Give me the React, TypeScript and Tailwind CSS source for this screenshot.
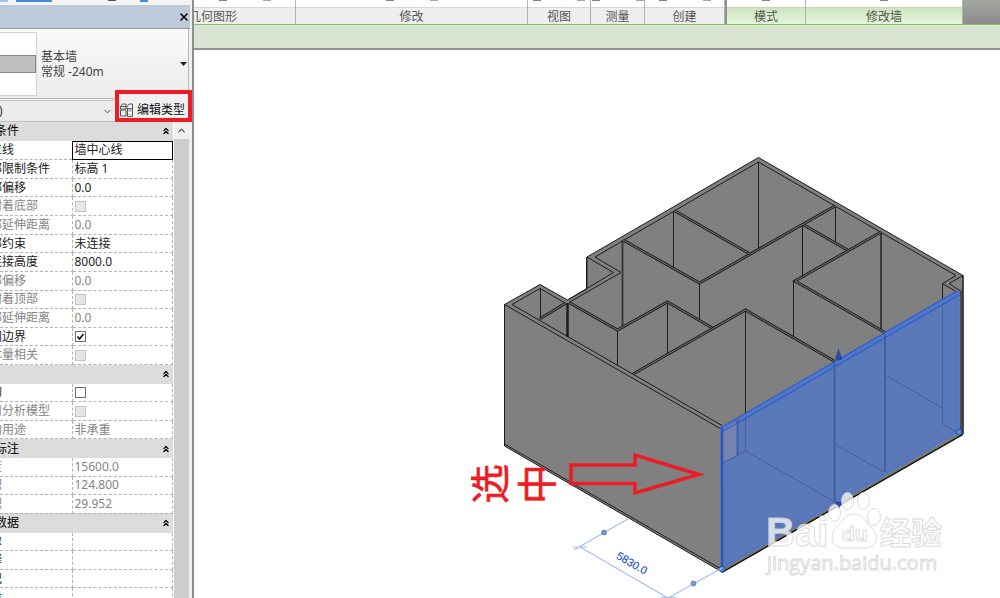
import { useState } from "react";
import { ChevronDown, ChevronUp, ChevronsUp, X } from "lucide-react";

type Row = {
  label: string;
  value?: string;
  check?: boolean;
  disabled?: boolean;
  active?: boolean;
};

const sections: { title: string; rows: Row[] }[] = [
  {
    title: "限制条件",
    rows: [
      { label: "定位线", value: "墙中心线", active: true },
      { label: "底部限制条件", value: "标高 1" },
      { label: "底部偏移", value: "0.0" },
      { label: "已附着底部", check: false, disabled: true },
      { label: "底部延伸距离", value: "0.0", disabled: true },
      { label: "顶部约束", value: "未连接" },
      { label: "无连接高度", value: "8000.0" },
      { label: "顶部偏移", value: "0.0", disabled: true },
      { label: "已附着顶部", check: false, disabled: true },
      { label: "顶部延伸距离", value: "0.0", disabled: true },
      { label: "房间边界", check: true },
      { label: "与体量相关", check: false, disabled: true },
    ],
  },
  {
    title: "结构",
    rows: [
      { label: "结构", check: false },
      { label: "启用分析模型", check: false, disabled: true },
      { label: "结构用途", value: "非承重", disabled: true },
    ],
  },
  {
    title: "尺寸标注",
    rows: [
      { label: "长度", value: "15600.0", disabled: true },
      { label: "面积", value: "124.800", disabled: true },
      { label: "体积", value: "29.952", disabled: true },
    ],
  },
  {
    title: "标识数据",
    rows: [
      { label: "图像" },
      { label: "注释" },
      { label: "标记" },
      { label: "阶段" },
    ],
  },
];

const CheckCell = ({ row }: { row: Row }) => {
  const [on, setOn] = useState(row.check ?? false);
  return (
    <span className="relative block size-[11px]">
      <input
        type="checkbox"
        aria-label={row.label}
        checked={on}
        disabled={row.disabled}
        onChange={() => setOn(!on)}
        className="block size-[11px] appearance-none border border-[#707070] bg-white disabled:border-[#c4c4c4] disabled:bg-[#e6e6e6]"
      />
      {on && (
        <svg viewBox="0 0 11 11" className="pointer-events-none absolute inset-0 size-[11px]">
          <path d="M2.5 5.5 4.5 8 8.5 3" fill="none" stroke="#111" strokeWidth="1.7" />
        </svg>
      )}
    </span>
  );
};

const PropertyTable = () => (
  <table className="h-[485px] w-[173px] shrink-0 table-fixed border-collapse text-xs leading-4">
    <colgroup>
      <col className="w-[72px]" />
      <col />
    </colgroup>
    {sections.map((section) => (
      <tbody key={section.title}>
        <tr className="bg-[#dcdcdc]">
          <th colSpan={2} className="p-0 font-normal">
            <div className="flex h-[17px] items-center justify-between overflow-hidden pr-[2px]">
              <span className="-ml-[29px] whitespace-nowrap text-black">{section.title}</span>
              <button aria-label={"折叠" + section.title}>
                <ChevronsUp size={10} strokeWidth={3} />
              </button>
            </div>
          </th>
        </tr>
        {section.rows.map((row) => (
          <tr key={row.label} className={row.disabled ? "text-[#858585]" : "text-[#1c1c1c]"}>
            <td className="border-r border-b border-dashed border-[#b4b4b4] p-0">
              <div className="h-4 overflow-hidden">
                <span className="-ml-[22px] block whitespace-nowrap">{row.label}</span>
              </div>
            </td>
            <td
              className={
                row.active
                  ? "border border-black p-0 pl-[2px]"
                  : "border-r border-b border-dashed border-[#b4b4b4] p-0 pl-[2px]"
              }
            >
              {row.check === undefined ? row.value : <CheckCell row={row} />}
            </td>
          </tr>
        ))}
      </tbody>
    ))}
  </table>
);

const PropertiesPanel = () => (
  <aside className="flex w-[194px] shrink-0 flex-col overflow-hidden border-r-2 border-[#8e8e8e] bg-[#f0f0f0]">
    <div className="flex h-[5px] shrink-0 gap-2 bg-[#f4f4f4]">
      <span className="h-[2px] w-2 bg-[#9cc8ec]" />
      <span className="h-[2px] w-9 bg-[#3f8fd0]" />
      <span className="ml-12 h-[1px] w-2 bg-[#555]" />
      <span className="ml-4 h-[2px] w-2 bg-[#4a90d9]" />
    </div>
    <div className="mr-[2px] flex h-6 shrink-0 items-center justify-end border-b border-[#8f979f] bg-[#bccad9]">
      <button aria-label="关闭">
        <X size={12} strokeWidth={3} />
      </button>
    </div>
    <button className="mr-[3px] flex h-[70px] shrink-0 items-center border-r border-b border-[#b8b8b8] bg-linear-to-b from-[#fafafa] to-[#ececec] text-left text-xs leading-[15px] text-[#444]">
      <span className="flex h-16 w-[37px] items-center border border-l-0 border-[#d5d5d5] bg-white">
        <span className="h-[18px] w-full border-y border-r border-[#888] bg-[#bfbfbf]" />
      </span>
      <span className="ml-1 grow">
        基本墙
        <br />
        常规 -240m
      </span>
      <svg viewBox="0 0 7 4" className="mr-[1px] h-1 w-[7px]">
        <path d="M0 0h7L3.500 4z" fill="#222" />
      </svg>
    </button>
    <div className="-mt-[9px] flex h-8 shrink-0 items-end">
      <button className="flex h-[22px] w-[115px] items-center justify-between border-y border-[#c0c0c0] bg-[#ebebeb] pr-[2px] text-xs" aria-label="墙 (1)">
        <span className="-ml-px text-[#333]">)</span>
        <ChevronDown size={11} color="#444" />
      </button>
      <button className="flex h-8 grow items-center gap-1 border-4 border-[#ee1c25] bg-[#f0f0f0] pt-2 pl-px text-xs leading-4 whitespace-nowrap text-[#111]">
        <svg viewBox="0 0 13 14" className="h-[14px] w-[13px] shrink-0" fill="none" stroke="#555">
          <path d="M.5 3.500 2.500 1h3.500v5H.5zM7 3.500 9 1h3.500v5H7zM.5 9V7h5.500v6H.5zM.5 3.500H6" />
          <path d="M7.500 6h5v7.500h-5z" fill="#fff" />
          <path d="M8.500 8h3M8.500 11.500h1m1 0h1" stroke="#3b82d0" />
        </svg>
        编辑类型
      </button>
    </div>
    <div className="flex h-0 grow overflow-hidden bg-white">
      <PropertyTable />
      <div className="ml-px w-[15px] shrink-0 bg-[#cdcdcd]">
        <button aria-label="向上滚动" className="flex h-[17px] w-full items-center justify-center bg-[#f0f0f0]">
          <ChevronUp size={11} color="#444" strokeWidth={2.500} />
        </button>
      </div>
      <div className="grow bg-[#efefef]" />
    </div>
  </aside>
);

const Ribbon = () => (
  <header className="shrink-0">
    <div className="flex h-6 bg-[#8f928f] text-xs leading-[17px] text-[#555]">
      <RibbonGroup className="w-[102px]" name="几何图形" left />
      <RibbonGroup className="w-[232px]" name="修改" />
      <RibbonGroup className="w-[63px]" name="视图" />
      <RibbonGroup className="w-[54px]" name="测量" />
      <RibbonGroup className="w-[80px]" name="创建" />
      <RibbonGroup className="ml-[2px] w-[79px]" name="模式" green />
      <RibbonGroup className="w-[157px]" name="修改墙" green />
      <div className="grow bg-linear-to-b from-[#a3a8a0] to-[#8c8c8c]" />
    </div>
    <div className="h-[26px] border-t border-b-2 border-t-[#7dc855] border-b-[#929292] bg-[#d8e3d1]" />
  </header>
);

const RibbonGroup = ({
  name,
  className,
  green,
  left,
}: {
  name: string;
  className: string;
  green?: boolean;
  left?: boolean;
}) => (
  <div className={"shrink-0 overflow-hidden border-r border-[#b0b0b0] bg-white text-center " + className}>
    <div className="flex h-[7px] justify-center gap-9">
      <span className="h-px w-2 bg-[#7a8592]" />
      {!green && <span className="h-px w-2 bg-[#8eaccb]" />}
    </div>
    <div
      className={
        green
          ? "h-[17px] border-t border-[#c5d8bb] bg-linear-to-b from-[#cde5bf] to-[#e5f6da]"
          : "h-[17px] border-t border-[#d8d8d8] bg-[#efefef]"
      }
    >
      <span className={left ? "-ml-[5px] block text-left" : ""}>{name}</span>
    </div>
  </div>
);

// top edges of the partition walls, drawn as a dark band with a light core
const partitions = [
  "M539.500 319 566 303",
  "M569 302.500 617.500 330 667.500 302 712.500 328",
  "M633 374 745.500 310 835 361.500",
  "M623 240 699.500 283 835 206",
  "M675 211 750 254",
  "M803 224.500 847.500 250",
  "M881 232 795 281 885 332.500",
];

const verticals =
  "M540.500 288V319M617.500 331V366M667.500 303V353M699.500 284V319M673.500 212V268M758.500 162V248M835.500 206V243M802.500 225V276M793.500 282V337M745.500 311V413M942.500 284V303M504.500 304V446M586.500 257V289M963 275V434M961 292V432";

const Model = () => (
  <svg
    viewBox="194 50 806 548"
    preserveAspectRatio="xMidYMin meet"
    className="block w-full"
    role="img"
    aria-label="三维视图"
  >
    <path
      d="M504.500 304.500 540 284.500 567.500 300 587 289V257L758.500 157.500 963 275.500V434L722 572 504.500 446z"
      fill="#808080"
      stroke="#1c1c1c"
    />
    <g fill="none" stroke="#1c1c1c">
      <path d="M504.500 304.500 721 429M722 425.500 512 304.500 540 288.500 565 303M567.500 300 613.500 272.500 587 257M569 302.500 621 272.500 595 257 758.500 162 956 275.500 942.500 283.500 956 291.500M963 275.500 949 283.500 962 292" />
      <path d={verticals} />
      <path d="M504.500 444 722 569.500" />
    </g>
    <path d="M567.500 303V337" stroke="#1c1c1c" strokeWidth="2.500" />
    <path d="M881 232V330M622.500 240V327" stroke="#333" strokeWidth="1.800" />
    {partitions.map((d) => (
      <g key={d} fill="none">
        <path d={d} stroke="#222" strokeWidth="3" />
        <path d={d} stroke="#747474" strokeWidth="1" />
      </g>
    ))}

    {/* selected wall */}
    <path d="M720 428 955 291.500H960V432L722 570z" fill="#5b78b8" />
    <path d="M720 428 955 291.500H960V295L722 432z" fill="#4f77cc" />
    <path d="M723 430 738 421V455L723 463z" fill="#7583ae" />
    <g fill="none" stroke="#42609f">
      <path d="M745.500 416V451L835 502M745.500 451 723 463M836 445 884 472M886 375.500 942.500 408M942.500 303V424L956 432" />
      <path d="M834.500 363V501M885 334V472M737.500 420V455" strokeWidth="2" />
    </g>
    <g fill="none" stroke="#2856c4">
      <path d="M720 428 957 291M723 431.500 959 295" />
      <path d="M722 428V570" strokeWidth="2.500" />
      <path d="M956 293V431M722 567 958 431" stroke="#4674d4" />
    </g>
    <path d="M722 570.500 962 433" stroke="#777" strokeWidth="2" />
    <path d="M722 572.500 963 434.500" stroke="#111" strokeWidth="1.300" />
    <path d="M838.500 349.500 842 359Q838.500 361 835.500 359zM835.500 502H842L838.500 509z" fill="#2750a5" stroke="#223c78" strokeWidth=".6" />
    <g fill="#4a90e2" stroke="#24549c">
      <circle cx="959" cy="432" r="2.800" />
      <circle cx="722" cy="569" r="2.800" />
    </g>

    {/* dimension line */}
    <g fill="none" stroke="#a5bdf8" strokeWidth="1.200">
      <path d="M628.500 518.500 574 550M573 547H587M580 547 668 598M661 597.500H676M722 568 661 602" />
    </g>
    <g fill="#6da3e0" stroke="#6d7b8c">
      <circle cx="604" cy="532.500" r="2.400" />
      <circle cx="693.500" cy="583.500" r="2.400" />
    </g>
    <text
      transform="translate(632 563) rotate(30)"
      textAnchor="middle"
      dominantBaseline="central"
      fill="#2457bd"
      stroke="#2457bd"
      strokeWidth=".2"
      fontSize="11"
      fontFamily="Liberation Sans, sans-serif"
    >
      5830.0
    </text>

    {/* annotation */}
    <path
      d="M571 465H635V455L699 474.500 635 493V483.500H571z"
      fill="none"
      stroke="#ed1c24"
      strokeWidth="3.500"
    />
    <g
      fill="#ed1c24"
      stroke="#ed1c24"
      strokeWidth=".6"
      fontSize="40"
      textAnchor="middle"
      dominantBaseline="central"
      fontFamily="Noto Sans CJK SC, sans-serif"
    >
      <text transform="translate(488 484) rotate(-90)">选</text>
      <text transform="translate(535 484) rotate(-90)">中</text>
    </g>

    {/* watermark */}
    <g fill="#fff" fillOpacity=".75" stroke="#d2d2d2" strokeOpacity=".8" strokeWidth="1">
      <text x="766" y="546" fontSize="40" fontWeight="700" fontFamily="Liberation Sans, sans-serif">
        Bai
      </text>
      <ellipse cx="834.500" cy="513" rx="6" ry="8.500" />
      <ellipse cx="847.500" cy="501" rx="6" ry="8.500" />
      <ellipse cx="863.500" cy="501" rx="6" ry="8.500" />
      <ellipse cx="874" cy="517" rx="6.500" ry="8.500" />
      <path d="M854 514C844 514 843 522 836 528 830 534 830 547 843 548 850 548 858 548 866 548 878 547 879 535 872 528 865 522 864 514 854 514z" />
      <text x="842" y="541" fontSize="21" fontWeight="700" fontFamily="Liberation Sans, sans-serif">
        du
      </text>
      <text x="880" y="544" fontSize="31" fontWeight="700" fontFamily="Noto Sans CJK SC, sans-serif">
        经验
      </text>
      <text x="767" y="570" fontSize="20" fontWeight="500" fontFamily="Open Sans, sans-serif">
        jingyan.baidu.com
      </text>
    </g>
  </svg>
);

const App = () => {
  return (
    <div className="flex h-screen overflow-hidden bg-white font-['Noto_Sans','Noto_Sans_CJK_SC',sans-serif]">
      <PropertiesPanel />
      <main className="flex min-w-0 grow flex-col overflow-hidden">
        <Ribbon />
        <Model />
      </main>
    </div>
  );
};

export default App;
